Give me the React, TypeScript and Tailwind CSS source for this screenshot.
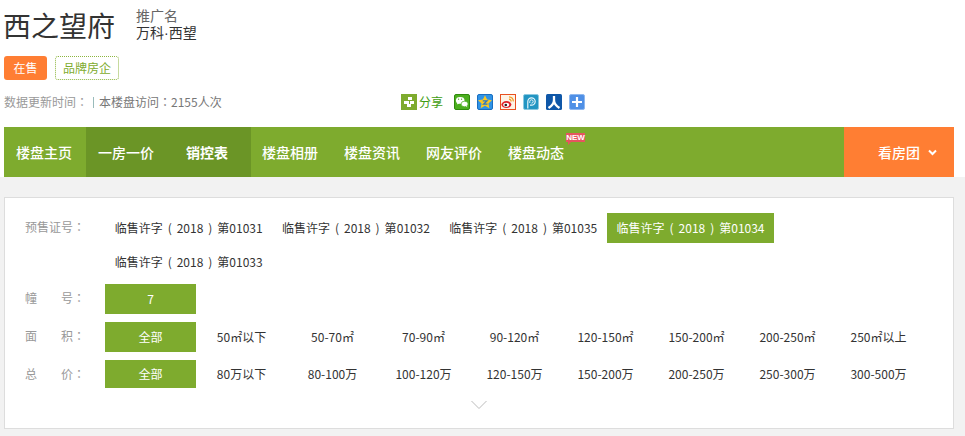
import React from 'react';

const licences = ['01031', '01032', '01035', '01034', '01033'];
const areas = ['全部', '50㎡以下', '50-70㎡', '70-90㎡', '90-120㎡', '120-150㎡', '150-200㎡', '200-250㎡', '250㎡以上'];
const prices = ['全部', '80万以下', '80-100万', '100-120万', '120-150万', '150-200万', '200-250万', '250-300万', '300-500万'];

const Colon = () => <span className="font-['Noto_Sans_CJK_TC',sans-serif]">：</span>;

const Paren = ({ c }: { c: string }) => <span className="inline-block w-[14px] text-center">{c}</span>;

const ShareIcons = () => (
  <div className="flex gap-[7px]">
    {/* wechat */}
    <svg width="16" height="16" viewBox="0 0 16 16">
      <rect x=".5" y=".5" width="15" height="15" rx="1.500" fill="#4bae1e" stroke="#2f8a0c" />
      <ellipse cx="6.200" cy="6.400" rx="4.300" ry="3.400" fill="#fff" />
      <path d="M3.500 8.500l-.6 2 2.400-1.200z" fill="#fff" />
      <ellipse cx="10.600" cy="10" rx="3.500" ry="2.800" fill="#fff" stroke="#4bae1e" strokeWidth=".7" />
      <path d="M12 12l1.200 1.500-.2-2z" fill="#fff" />
      <circle cx="4.600" cy="5.200" r=".6" fill="#3f9d12" />
      <circle cx="7.600" cy="5.200" r=".6" fill="#3f9d12" />
    </svg>
    {/* qzone */}
    <svg width="16" height="16" viewBox="0 0 16 16">
      <rect x=".5" y=".5" width="15" height="15" rx="1.500" fill="#2f93e6" stroke="#1a6fc0" />
      <path d="M8 1.200l2.100 4.400 4.900.6-3.600 3.200 1 4.800L8 11.800l-4.400 2.400 1-4.800L1 6.200l4.900-.6z" fill="#fbc723" />
      <path d="M5.800 6.800h4.300L6.500 10.200h4" fill="none" stroke="#2a78c8" strokeWidth="1.200" />
    </svg>
    {/* weibo */}
    <svg width="16" height="16" viewBox="0 0 16 16">
      <rect x=".5" y=".5" width="15" height="15" fill="#fdf3e6" stroke="#e8501f" />
      <ellipse cx="6.400" cy="10.600" rx="5" ry="3.500" fill="#e0222a" />
      <ellipse cx="6.200" cy="10.800" rx="3" ry="2.100" fill="#fff" />
      <circle cx="5.800" cy="11" r="1.300" fill="#222" />
      <path d="M9 2.800a4.300 4.300 0 0 1 4.300 4.600M9 5.200a2.100 2.100 0 0 1 2.100 2.300" fill="none" stroke="#f39a1e" strokeWidth="1.300" />
    </svg>
    {/* tencent p */}
    <svg width="16" height="16" viewBox="0 0 16 16">
      <rect x=".5" y=".5" width="15" height="15" rx="1.500" fill="#2295c2" stroke="#8cc9e0" />
      <path d="M4.800 14.500V7.500a3.700 3.700 0 1 1 3.700 3.700H7" fill="none" stroke="#e6f6fb" strokeWidth="1.200" />
      <path d="M6.800 9V7.500a1.700 1.700 0 1 1 1.700 1.700" fill="none" stroke="#e6f6fb" strokeWidth="1" />
    </svg>
    {/* renren */}
    <svg width="16" height="16" viewBox="0 0 16 16">
      <rect width="16" height="16" rx="1.500" fill="#0f57a8" />
      <path d="M8 2v4c0 3.200-2 5.800-5.500 8M8 6c0 3.200 2 5.800 5.500 8" fill="none" stroke="#fff" strokeWidth="2.300" />
    </svg>
    {/* more */}
    <svg width="16" height="16" viewBox="0 0 16 16">
      <rect x=".5" y=".5" width="15" height="15" rx="1.500" fill="#4f90e6" stroke="#8fb8ef" />
      <path d="M8 3v10M3 8h10" stroke="#fff" strokeWidth="2.200" />
    </svg>
  </div>
);

const Row = ({ label, items, h }: { label: [string, string]; items: string[]; h: string }) => (
  <div className="flex">
    <div className="w-[100px] pl-[20px] pt-[5px] flex text-[12px] text-[#999] h-[20px]">
      <span className="w-[36px]">{label[0]}</span>
      <span>{label[1]}<Colon /></span>
    </div>
    <div className="flex">
      {items.map((t, i) => (
        <div
          key={t}
          className={`w-[91px] flex items-center justify-center text-[12px] ${h} ${i === 0 ? 'bg-[#7eab2e] text-white' : 'text-[#333]'}`}
        >
          {t}
        </div>
      ))}
    </div>
  </div>
);

export default function App() {
  return (
    <div className="w-[965px] h-[436px] overflow-hidden bg-white font-['Noto_Sans_CJK_SC','Liberation_Sans',sans-serif]">
      <div className="pl-[4px] pr-[11px]">
        {/* title */}
        <div className="flex pt-[6px] h-[56px]">
          <h1 className="text-[28px] leading-[38px] text-[#333] w-[132px] font-normal -ml-[1px] mr-[1px]">西之望府</h1>
          <div className="text-[14px] leading-[17px] pt-[1px]">
            <div className="text-[#666]">推广名</div>
            <div className="text-[#333]">万科<span className="font-['Liberation_Sans',sans-serif]">·</span>西望</div>
          </div>
        </div>

        {/* tags */}
        <div className="flex gap-[8px] h-[24px]">
          <span className="w-[43px] h-[24px] rounded-[3px] bg-[#ff7e33] text-white text-[12px] flex items-center justify-center">在售</span>
          <span className="w-[64px] h-[24px] rounded-[3px] border border-dotted border-[#8db53f] text-[#7eab2e] text-[12px] flex items-center justify-center">品牌房企</span>
        </div>

        {/* info + share */}
        <div className="flex items-center h-[16px] mt-[14px]">
          <div className="w-[397px] text-[12px] text-[#999] flex items-center">
            <span className="w-[89px]">数据更新时间<Colon /></span>
            <span className="w-[1px] h-[11px] bg-[#9bb] mr-[5px]" />
            <span className="text-[#777]">本楼盘访问<Colon />2155人次</span>
          </div>
          <svg width="16" height="16" viewBox="0 0 16 16">
            <rect width="16" height="16" fill="#7eab2e" />
            <path d="M7 3h4v3H7zM3 7h5v3H3zM9 7h4v3H9zM6 10h4v3H6z" fill="#fff" />
          </svg>
          <span className="w-[37px] pl-[2px] text-[12px] text-[#3f9d12]">分享</span>
          <ShareIcons />
        </div>

        {/* nav */}
        <nav className="flex h-[50px] mt-[17px] bg-[#7eab2e] text-white text-[14px] font-medium leading-[50px]">
          <a className="w-[82px] pl-[12px]">楼盘主页</a>
          <a className="w-[82px] pl-[12px] bg-[#6b9526]">一房一价</a>
          <a className="w-[83px] pl-[18px] bg-[#6b9526] font-bold">销控表</a>
          <a className="w-[82px] pl-[11px]">楼盘相册</a>
          <a className="w-[82px] pl-[11px]">楼盘资讯</a>
          <a className="w-[82px] pl-[11px]">网友评价</a>
          <a className="relative w-[82px] pl-[11px]">
            楼盘动态
            <span className="absolute left-[69px] top-[6px] w-[19px] h-[9px] bg-[#e5555f] text-white text-[8px] leading-[9px] text-center font-['Liberation_Sans',sans-serif] font-bold">NEW</span>
            <span className="absolute left-[71px] top-[15px] w-0 h-0 border-t-[3px] border-r-[3px] border-t-[#e5555f] border-r-transparent" />
          </a>
          <div className="flex-1" />
          <a className="w-[110px] bg-[#ff7e33] pl-[34px] flex items-center gap-[8px]">
            看房团
            <svg width="9" height="7" viewBox="0 0 9 7"><path d="M1 1.500l3.500 3.500L8 1.500" fill="none" stroke="#fff" strokeWidth="2" /></svg>
          </a>
        </nav>
      </div>

      {/* filter panel */}
      <div className="bg-[#f2f2f2] h-[259px] px-[4px] pt-[20px]">
        <div className="w-[950px] h-[232px] bg-white border border-[#ddd] pt-[15px] relative">
          <div className="flex">
            <div className="w-[100px] pl-[20px] pt-[5px] text-[12px] text-[#999]">预售证号<Colon /></div>
            <div className="w-[700px] flex flex-wrap gap-y-[4px]">
              {licences.map((t, i) => (
                <div
                  key={t}
                  className={`h-[30px] w-[167.300px] flex items-center justify-center text-[12px] ${i === 3 ? 'bg-[#7eab2e] text-white' : 'text-[#333]'}`}
                >
                  <span>临售许字<Paren c="(" />2018<Paren c=")" />第{t}</span>
                </div>
              ))}
            </div>
          </div>
          <div className="flex flex-col gap-[8px] mt-[7px]">
            <Row label={['幢', '号']} items={['7']} h="h-[30px]" />
            <Row label={['面', '积']} items={areas} h="h-[30px]" />
            <Row label={['总', '价']} items={prices} h="h-[28px]" />
          </div>
          <div className="flex justify-center mt-[12px]">
            <svg width="16" height="10" viewBox="0 0 16 10"><path d="M.5 1L8 8.500 15.500 1" fill="none" stroke="#bbb" /></svg>
          </div>
        </div>
      </div>
    </div>
  );
}
